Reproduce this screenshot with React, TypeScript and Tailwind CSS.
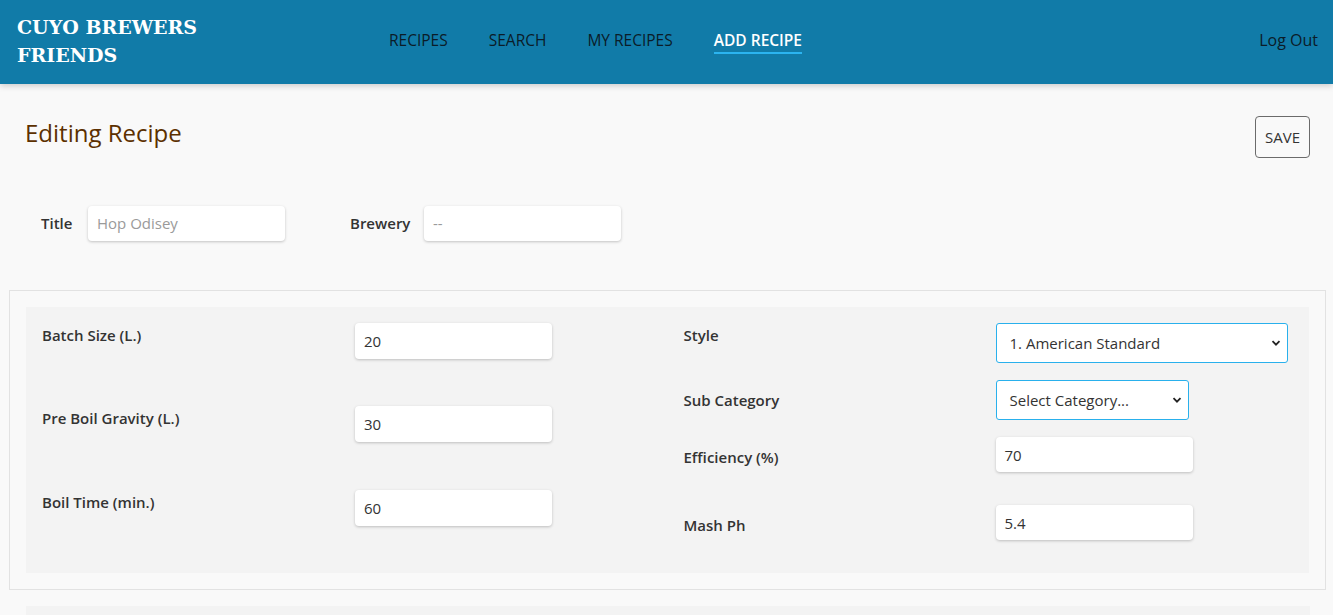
import React from "react";

const font = { fontFamily: '"Open Sans", "Noto Sans", sans-serif' };

function Chevron() {
  return (
    <svg width="10" height="10" viewBox="0 0 10 10" className="shrink-0">
      <path d="M1.5 3.2 L5 6.7 L8.5 3.2" fill="none" stroke="#222" strokeWidth="1.8" />
    </svg>
  );
}

function TextBox({ value, w = "w-[197px]", h = "h-[36px]", placeholder = false }: { value: string; w?: string; h?: string; placeholder?: boolean }) {
  return (
    <div className={`${w} ${h} shrink-0 bg-white rounded-[4px] shadow-[0_1px_3px_rgba(0,0,0,0.22)] flex items-center px-[9px] text-[15px] font-normal ${placeholder ? "text-[#9a9a9a]" : "text-[#333]"}`}>
      {value}
    </div>
  );
}

function SelectBox({ value, w, h = "h-[40px]" }: { value: string; w: string; h?: string }) {
  return (
    <div className={`${w} ${h} shrink-0 bg-white rounded-[3px] border border-[#29b0ec] flex items-center justify-between pl-[13px] pr-[6px] text-[15px] font-normal text-[#333]`}>
      <span>{value}</span>
      <Chevron />
    </div>
  );
}

export default function App() {
  return (
    <div className="min-h-[615px] bg-[#f9f9f9] overflow-hidden" style={font}>
      <header className="h-[84px] bg-[#117ba8] flex items-center pl-[17px] pr-[15px] shadow-[0_2px_6px_rgba(0,0,0,0.18)] relative">
        <div
          className="w-[355px] text-white font-bold text-[19px] leading-[28px] -mt-[2px]"
          style={{ fontFamily: '"DejaVu Serif", "Liberation Serif", serif' }}
        >
          CUYO BREWERS
          <br />
          FRIENDS
        </div>
        <nav className="flex gap-[41px] ml-[17px] text-[15.5px] font-medium text-[#0b1c28] -mt-[3px]">
          <span>RECIPES</span>
          <span>SEARCH</span>
          <span>MY RECIPES</span>
          <span className="text-white font-semibold relative">
            ADD RECIPE
            <span className="absolute left-0 right-0 -bottom-[2px] h-[2px] bg-[#2bb4f0]"></span>
          </span>
        </nav>
        <div className="ml-auto text-[16px] text-[#0b1c28] -mt-[4px]">Log Out</div>
      </header>

      <div className="flex items-start justify-between pl-[25px] pr-[23px] pt-[32px]">
        <h1 className="text-[24px] font-medium text-[#5c3000] leading-[32px] mt-[1px]">Editing Recipe</h1>
        <button className="w-[55px] h-[42px] border border-[#6b6b6b] rounded-[4px] text-[15px] text-[#333] font-medium bg-transparent">
          SAVE
        </button>
      </div>

      <div className="flex items-center pl-[41px] mt-[48px]">
        <span className="text-[15px] font-semibold text-[#333] w-[47px]">Title</span>
        <TextBox value="Hop Odisey" w="w-[197px]" h="h-[35px]" placeholder />
        <span className="text-[15px] font-semibold text-[#333] ml-[65px] w-[74px]">Brewery</span>
        <TextBox value="--" w="w-[197px]" h="h-[35px]" placeholder />
      </div>

      <div className="ml-[9px] mr-[7px] mt-[49px] border border-[#e2e2e2] p-[16px]">
        <div className="bg-[#f3f3f3] grid grid-cols-2 pt-[16px] pb-[33px] text-[15px] leading-[20px] font-semibold text-[#333]">
          <div className="px-[16px] flex flex-col">
            <div className="flex items-start">
              <span className="w-[313px] mt-[2px]">Batch Size (L.)</span>
              <TextBox value="20" />
            </div>
            <div className="flex items-start mt-[47px]">
              <span className="w-[313px] mt-[2px]">Pre Boil Gravity (L.)</span>
              <TextBox value="30" />
            </div>
            <div className="flex items-start mt-[48px]">
              <span className="w-[313px] mt-[2px]">Boil Time (min.)</span>
              <TextBox value="60" />
            </div>
          </div>
          <div className="pl-[16px] pr-[17px] flex flex-col">
            <div className="flex items-start">
              <span className="w-[312px] mt-[2px]">Style</span>
              <SelectBox value="1. American Standard" w="w-[292px]" />
            </div>
            <div className="flex items-start mt-[17px]">
              <span className="w-[312px] mt-[10px]">Sub Category</span>
              <SelectBox value="Select Category..." w="w-[193px]" />
            </div>
            <div className="flex items-start mt-[17px]">
              <span className="w-[312px] mt-[10px]">Efficiency (%)</span>
              <TextBox value="70" h="h-[35px]" />
            </div>
            <div className="flex items-start mt-[33px]">
              <span className="w-[312px] mt-[10px]">Mash Ph</span>
              <TextBox value="5.4" h="h-[35px]" />
            </div>
          </div>
        </div>
      </div>

      <div className="ml-[26px] mr-[23px] mt-[16px] h-[40px] bg-[#f3f3f3]"></div>
    </div>
  );
}
